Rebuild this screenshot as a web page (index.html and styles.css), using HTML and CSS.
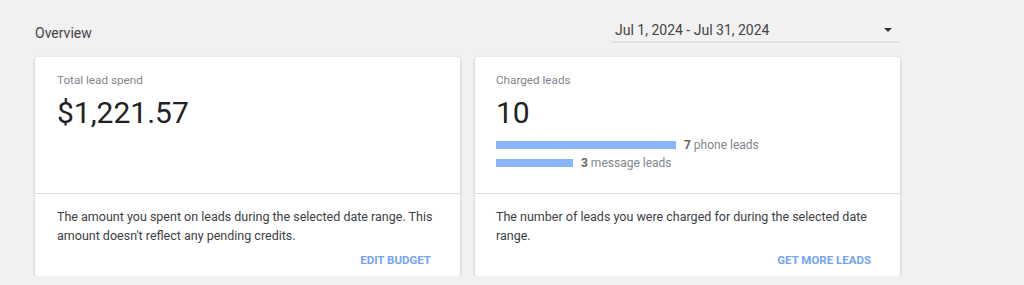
FILE: index.html
```html
<!DOCTYPE html>
<html lang="en">
<head>
  <meta charset="UTF-8" />
  <title>Overview</title>
  <link rel="stylesheet" href="styles.css">
</head>
<body>
  <div class="pagina">
    <div class="cabecalho">
      <h2>Overview</h2>
      <div class="periodo">
        <span>Jul 1, 2024 - Jul 31, 2024</span>
        <span class="seta"></span>
      </div>
    </div>

    <div class="cartoes">
      <div class="cartao">
        <div class="cartao-topo">
          <div class="rotulo">Total lead spend</div>
          <div class="valor">$1,221.57</div>
        </div>
        <div class="cartao-rodape">
          <p>The amount you spent on leads during the selected date range. This amount doesn't reflect any pending credits.</p>
          <div class="acoes"><button>Edit budget</button></div>
        </div>
      </div>

      <div class="cartao">
        <div class="cartao-topo">
          <div class="rotulo">Charged leads</div>
          <div class="valor">10</div>
          <div class="barras">
            <div class="linha-barra">
              <div class="barra" style="width: 180px"></div>
              <span><b>7</b> phone leads</span>
            </div>
            <div class="linha-barra">
              <div class="barra" style="width: 77px"></div>
              <span><b>3</b> message leads</span>
            </div>
          </div>
        </div>
        <div class="cartao-rodape">
          <p>The number of leads you were charged for during the selected date range.</p>
          <div class="acoes"><button>Get more leads</button></div>
        </div>
      </div>
    </div>
  </div>
</body>
</html>
```

FILE: styles.css
```css
body {
  margin: 0;
  font-family: Roboto, 'Liberation Sans', Arial, sans-serif;
  background: #f1f1f1;
  color: #3c4043;
}
.pagina {
  width: 865px;
  padding: 17px 0 0 35px;
}
.cabecalho {
  display: flex;
  justify-content: space-between;
  align-items: flex-start;
  height: 40px;
}
h2 {
  margin: 8px 0 0;
  font-size: 14px;
  font-weight: 400;
  line-height: 16px;
  color: #444;
}
.periodo {
  width: 277px;
  display: flex;
  justify-content: space-between;
  align-items: center;
  padding: 5px 8px 3px 4px;
  border-bottom: 2px solid #e2e2e2;
  font-size: 14px;
  line-height: 16px;
  color: #444;
}
.seta {
  width: 0;
  height: 0;
  border-left: 4px solid transparent;
  border-right: 4px solid transparent;
  border-top: 4px solid #333;
}
.cartoes {
  display: grid;
  grid-template-columns: 425px 425px;
  gap: 15px;
}
.cartao {
  background: #fff;
  border-radius: 2px;
  box-shadow: 0 1px 3px rgba(0,0,0,0.22);
}
.cartao-topo {
  height: 121px;
  padding: 15px 22px 0 21px;
  border-bottom: 1px solid #e0e0e0;
}
.cartao:first-child .cartao-topo,
.cartao:first-child .cartao-rodape {
  padding-left: 22px;
}
.rotulo {
  font-size: 11.7px;
  line-height: 16px;
  color: #80868b;
}
.valor {
  margin-top: 7px;
  font-size: 30px;
  line-height: 36px;
  color: #202124;
}
.barras {
  margin-top: 5px;
}
.linha-barra {
  display: flex;
  align-items: center;
  gap: 8px;
  height: 18px;
  font-size: 12px;
  color: #80868b;
}
.linha-barra b {
  color: #666;
}
.barra {
  height: 8px;
  background: #8ab4f8;
}
.cartao-rodape {
  padding: 14px 21px 4px 21px;
}
.cartao-rodape p {
  margin: 0;
  font-size: 12.5px;
  line-height: 18.5px;
  color: #3c4043;
}
.acoes {
  display: flex;
  justify-content: flex-end;
  margin-top: 3px;
}
button {
  background: none;
  border: none;
  padding: 4px 8px;
  font-family: inherit;
  font-size: 11.5px;
  font-weight: 700;
  line-height: 16px;
  text-transform: uppercase;
  color: #74a3f5;
  cursor: pointer;
}
```
